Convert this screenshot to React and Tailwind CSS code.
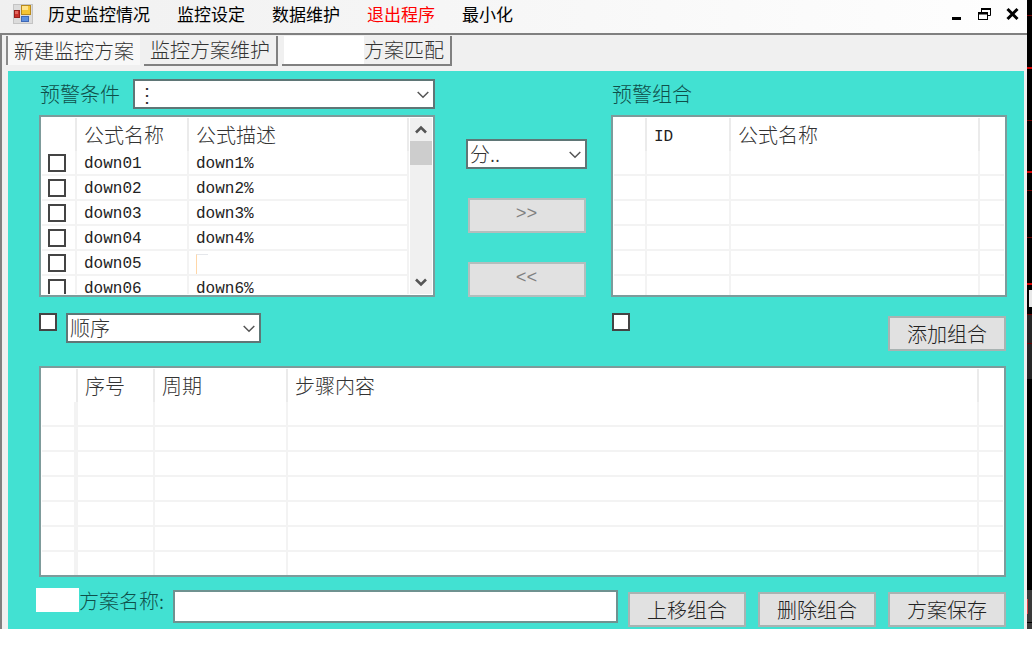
import React, { useState } from "react";

const menus = [
  { name: "历史监控情况" },
  { name: "监控设定" },
  { name: "数据维护" },
  { name: "退出程序", danger: true },
  { name: "最小化" },
];

const formulas = [
  { id: "down01", desc: "down1%" },
  { id: "down02", desc: "down2%" },
  { id: "down03", desc: "down3%" },
  { id: "down04", desc: "down4%" },
  { id: "down05", desc: "" },
  { id: "down06", desc: "down6%" },
];

const mono = "font-['Liberation_Mono','Noto_Sans_CJK_SC',monospace]";

const AppIcon = () => (
  <svg width="20" height="20" viewBox="0 0 20 20" aria-hidden="true">
    <rect x="0.5" y="0.5" width="19" height="19" fill="#dcdcdc" stroke="#c4c4c4" />
    <rect x="8.5" y="1.5" width="9" height="9" fill="#f5c433" stroke="#b98a1c" />
    <rect x="9" y="2" width="6" height="4" fill="#ffe48a" />
    <rect x="1.5" y="6.5" width="5" height="7" fill="#c9302a" stroke="#96201c" />
    <rect x="2" y="7" width="3" height="3" fill="#e2685f" />
    <rect x="8.5" y="12.5" width="7" height="5" fill="#5b8fe0" stroke="#3f68b5" />
  </svg>
);

const Chevron = ({ className }) => (
  <svg
    className={className}
    width="12"
    height="8"
    viewBox="0 0 12 8"
    fill="none"
    stroke="#555"
    strokeWidth="1.5"
    aria-hidden="true"
  >
    <path d="M0.7 1 6 6.3 11.3 1" />
  </svg>
);

const Dropdown = ({ id, label, options, className }) => (
  <div className={`relative ${className}`}>
    <select
      id={id}
      aria-label={label}
      className="block h-[30px] w-full appearance-none border-2 border-[#5f7676] bg-white pl-0.5 pr-6 text-xl leading-[26px] font-light text-[#333]"
    >
      {options.map((o) => (
        <option key={o}>{o}</option>
      ))}
    </select>
    <Chevron className="pointer-events-none absolute right-1.5 top-3" />
  </div>
);

const CheckBox = ({ label }) => (
  <input
    type="checkbox"
    aria-label={label}
    className="block size-[18px] shrink-0 appearance-none border-2 border-[#444] bg-white checked:bg-[#444]"
  />
);

const Button = ({ children, muted }) => (
  <button
    disabled={muted}
    className={
      muted
        ? `h-[35px] w-[118px] border-2 border-[#b3bebd] bg-[#e1e1e1] pb-1 text-lg leading-6 text-[#808080] ${mono}`
        : "h-[35px] w-[118px] shrink-0 border-2 border-[#a9b3b2] bg-[#e1e1e1] text-xl leading-6 font-light text-[#222]"
    }
  >
    {children}
  </button>
);

const Th = ({ children, className }) => (
  <th
    className={`h-[33px] border-r-2 border-[#ebebeb] p-0 pl-[7px] text-left text-xl leading-6 font-light text-[#333] ${className}`}
  >
    {children}
  </th>
);

const Td = ({ children, className }) => (
  <td
    className={`h-[25px] border-r-2 border-b-2 border-[#f3f3f3] p-0 pl-[7px] text-base leading-5 text-[#222] ${mono} ${className}`}
  >
    {children}
  </td>
);

const EmptyRows = ({ rows, cols, first }) =>
  Array.from({ length: rows }, (_, r) => (
    <tr key={r}>
      {Array.from({ length: cols }, (_, c) => (
        <Td key={c} className={c === 0 ? first : c === cols - 1 ? "border-r-0!" : ""} />
      ))}
    </tr>
  ));

const FormulaList = () => (
  <div className="flex h-[182px] overflow-hidden border-2 border-[#7d9b9b] bg-white p-px">
    <div className="min-w-0 flex-1 overflow-hidden">
      <table className="w-full table-fixed border-separate border-spacing-0">
        <thead>
          <tr>
            <Th className="w-[35px]" />
            <Th className="w-28">公式名称</Th>
            <Th>公式描述</Th>
          </tr>
        </thead>
        <tbody>
          {formulas.map((f) => (
            <tr key={f.id}>
              <Td className="pl-1.5!">
                <CheckBox label={f.id} />
              </Td>
              <Td className="pt-[3px]!">{f.id}</Td>
              <Td className="pt-[3px]!">
                {f.desc || (
                  <span className="block h-5 w-3 border-l border-t border-l-orange-200 border-t-gray-200" />
                )}
              </Td>
            </tr>
          ))}
        </tbody>
      </table>
    </div>
    <div className="ml-px flex w-[22px] flex-col bg-[#f0f0f0]">
      <button aria-label="向上" className="flex h-[23px] items-center justify-center">
        <svg width="12" height="9" viewBox="0 0 12 9" fill="none" stroke="#555" strokeWidth="2.6">
          <path d="M1 7.5 6 2.5 11 7.5" />
        </svg>
      </button>
      <div className="h-6 bg-[#cdcdcd]" />
      <button aria-label="向下" className="mt-auto flex h-[23px] items-center justify-center">
        <svg width="12" height="9" viewBox="0 0 12 9" fill="none" stroke="#555" strokeWidth="2.6">
          <path d="M1 1.5 6 6.5 11 1.5" />
        </svg>
      </button>
    </div>
  </div>
);

const GroupList = () => (
  <div className="h-[182px] overflow-hidden border-2 border-[#7d9b9b] bg-white p-px">
    <table className="w-full table-fixed border-separate border-spacing-0">
      <thead>
        <tr>
          <Th className="w-[33px]" />
          <Th className="w-[84px]">
            <span className={`text-base font-normal text-[#222] ${mono}`}>ID</span>
          </Th>
          <Th>公式名称</Th>
          <Th className="w-6 border-r-0!" />
        </tr>
      </thead>
      <tbody>
        <EmptyRows rows={6} cols={4} />
      </tbody>
    </table>
  </div>
);

const StepList = () => (
  <div className="h-[211px] overflow-hidden border-2 border-[#7d9b9b] bg-white p-px">
    <table className="w-full table-fixed border-separate border-spacing-0">
      <thead>
        <tr>
          <Th className="w-9" />
          <Th className="w-[77px]">序号</Th>
          <Th className="w-[133px]">周期</Th>
          <Th>步骤内容</Th>
          <Th className="w-6 border-r-0!" />
        </tr>
      </thead>
      <tbody>
        <EmptyRows rows={7} cols={5} first="border-r-4" />
      </tbody>
    </table>
  </div>
);

// strip of the chart window lying behind the dialog
const ChartEdge = () => (
  <svg className="w-[5px] shrink-0 bg-black" viewBox="0 0 5 629" preserveAspectRatio="none" aria-hidden="true">
    <rect y="315" width="5" height="64" fill="#262626" />
    <rect y="590" width="5" height="39" fill="#3a3a3a" />
    <path d="M0 15.5h5M0 120.5h5M0 190.5h5M0 237.5h5M0 314.5h5M0 343.5h5" stroke="#6e0000" />
    <path d="M0 68h5M0 172h5M0 284h5" stroke="#d40000" strokeWidth="2" />
    <rect x="2" y="290" width="3" height="17" fill="#e8e8e8" />
    <path d="M0.5 599v15" stroke="#d44" />
    <path d="M0 622.5h5" stroke="#000" />
  </svg>
);

const App = () => {
  const [planName, setPlanName] = useState("");

  return (
    <div className="min-h-screen bg-white font-['Noto_Sans_CJK_SC',sans-serif]">
      <div className="flex">
        <div className="min-w-0 flex-1">
          <header className="flex h-[33px] items-center bg-linear-to-r from-[#f0f0f0] to-[#fefefe] pr-2 pb-1.5 pl-[13px]">
            <AppIcon />
            <nav className="ml-[15px] flex gap-[27px] text-[17px] leading-6">
              {menus.map((m) => (
                <button key={m.name} className={m.danger ? "text-[#f00]" : "text-black"}>
                  {m.name}
                </button>
              ))}
            </nav>
            <div className="ml-auto flex items-center gap-[15px]">
              <button aria-label="最小化窗口">
                <svg width="13" height="14" viewBox="0 0 13 14">
                  <rect x="2" y="10" width="9" height="3" />
                </svg>
              </button>
              <button aria-label="还原窗口">
                <svg width="13" height="14" viewBox="0 0 13 14" fill="none" stroke="#000">
                  <path d="M3.5 5V1.5h9v7H10" />
                  <path d="M3 2h10M0 6.5h10" strokeWidth="2" />
                  <rect x="0.5" y="5.5" width="9" height="7" />
                </svg>
              </button>
              <button aria-label="关闭窗口">
                <svg width="13" height="14" viewBox="0 0 13 14" stroke="#000" strokeWidth="3">
                  <path d="M1.5 2 11.5 12M11.5 2 1.5 12" />
                </svg>
              </button>
            </div>
          </header>

          <div className="border-t-2 border-l-2 border-[#808080] bg-[#f0f0f0] pr-[3px]">
            <div className="flex h-9 gap-1 pt-px pl-1 text-xl leading-7 font-light text-[#333]">
              <button className="h-[29px] border-l-2 border-[#8a8a8a] bg-[#f8f8f8] px-1.5">
                新建监控方案
              </button>
              <button className="h-[30px] border-r-2 border-b-2 border-[#808080] px-1.5">
                监控方案维护
              </button>
              <button className="flex h-[30px] border-r-2 border-b-2 border-[#808080] pr-1.5 pl-0.5">
                <span className="h-7 w-20 bg-white" />
                方案匹配
              </button>
            </div>

            <main className="ml-1.5 bg-[#42e1d2] pt-2 pr-[17px] pb-0.5 pl-[31px]">
              <div className="grid grid-cols-[1fr_176px_1fr]">
                <div className="flex items-center">
                  <label htmlFor="condition" className="w-[94px] pl-px text-xl leading-7 font-light text-[#0f4f4a]">
                    预警条件
                  </label>
                  <Dropdown id="condition" options={["⋮"]} className="flex-1" />
                </div>
                <p className="col-start-3 pl-px text-xl leading-[30px] font-light text-[#0f4f4a]">
                  预警组合
                </p>
              </div>

              <div className="mt-1.5 grid grid-cols-[1fr_176px_1fr]">
                <FormulaList />
                <div className="flex flex-col items-center justify-between pt-6 pr-6 pl-[31px]">
                  <Dropdown label="周期" options={["分.."]} className="w-full" />
                  <Button muted>&gt;&gt;</Button>
                  <Button muted>&lt;&lt;</Button>
                </div>
                <GroupList />
              </div>

              <div className="mt-4 grid grid-cols-[1fr_176px_1fr]">
                <div className="flex items-start gap-[9px]">
                  <CheckBox label="顺序" />
                  <Dropdown label="顺序方式" options={["顺序"]} className="w-[195px]" />
                </div>
                <div className="col-start-3 flex items-start justify-between px-px">
                  <CheckBox label="组合" />
                  <div className="pt-[3px]">
                    <Button>添加组合</Button>
                  </div>
                </div>
              </div>

              <div className="mt-[15px] pr-px">
                <StepList />
              </div>

              <div className="mt-[11px] -ml-[3px] flex items-start pr-px">
                <span className="h-6 w-[43px] bg-white" />
                <label htmlFor="plan" className="w-[94px] text-xl leading-[26px] font-light text-[#0f4f4a]">
                  方案名称:
                </label>
                <input
                  id="plan"
                  value={planName}
                  onChange={(e) => setPlanName(e.target.value)}
                  className="mt-0.5 h-[33px] min-w-0 flex-1 border-2 border-[#6f9290] bg-white px-1 text-xl"
                />
                <div className="ml-2.5 flex gap-3 pt-1">
                  <Button>上移组合</Button>
                  <Button>删除组合</Button>
                  <Button>方案保存</Button>
                </div>
              </div>
            </main>
          </div>
        </div>
        <ChartEdge />
      </div>
    </div>
  );
};

export default App;
